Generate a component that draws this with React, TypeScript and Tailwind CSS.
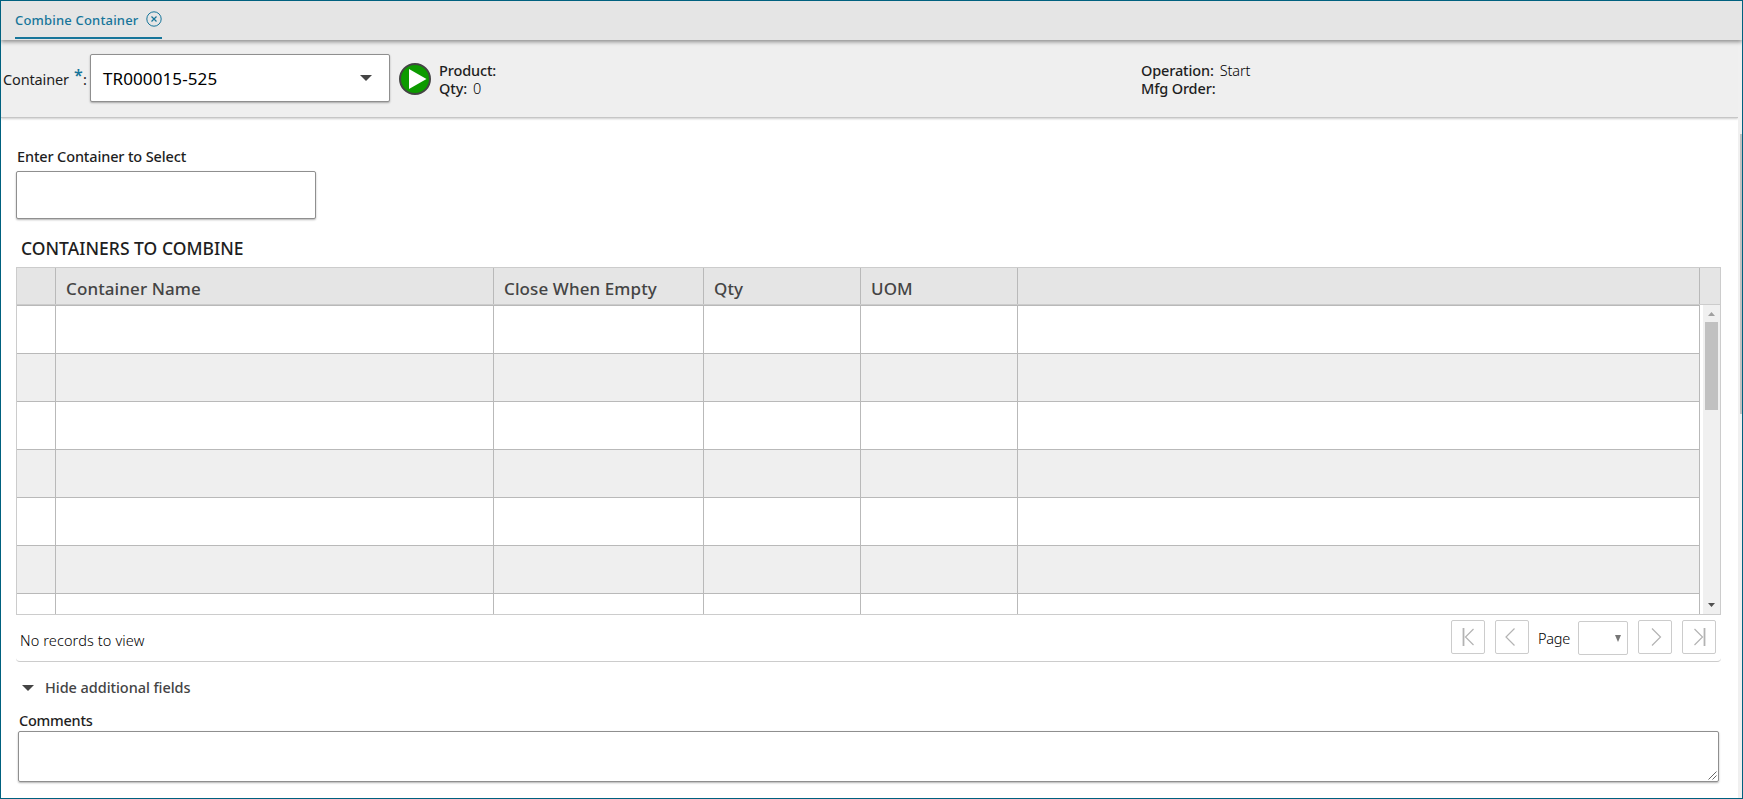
import React from "react";

const columns = ["", "Container Name", "Close When Empty", "Qty", "UOM", ""];
const grid = "grid grid-cols-[39px_438px_210px_157px_157px_682px]";
const rows = [0, 1, 2, 3, 4, 5, 6];

function PagerButton({ children, className = "" }: { children: React.ReactNode; className?: string }) {
  return (
    <button className={`flex h-[34px] w-[34px] items-center justify-center rounded-[2px] border border-[#ccc] bg-white ${className}`}>
      <svg width="32" height="32" viewBox="0 0 32 32" fill="none" stroke="#b3b3b3" strokeWidth="1.2">
        {children}
      </svg>
    </button>
  );
}

export default function App() {
  return (
    <div className="flex h-[799px] w-[1743px] flex-col overflow-hidden border border-[#00617f] bg-white font-['Noto_Sans','Open_Sans',sans-serif] text-[14.5px] leading-[18px] tracking-[-0.14px] text-[#1e1e1e]">
      <div className="z-10 flex h-[39px] shrink-0 bg-[#e5e5e5] pl-[14px] shadow-[0_2px_4px_rgba(0,0,0,0.4)]">
        <div className="flex h-[38px] w-[147px] justify-between border-b-2 border-[#16759a] text-[#16759a]">
          <span className="mt-[10px] whitespace-nowrap text-[13px] font-medium tracking-[0.18px]">Combine Container</span>
          <svg className="mt-[10px]" width="16" height="16" viewBox="0 0 16 16" fill="none" stroke="currentColor">
            <circle cx="8" cy="8" r="7.2" />
            <path d="M5.5 5.5l5 5M10.5 5.5l-5 5" strokeWidth="1.2" />
          </svg>
        </div>
      </div>

      <div className="flex min-h-0 flex-1">
        <div className="flex w-[1737px] shrink-0 flex-col">
          <header className="flex h-[78px] shrink-0 border-b border-[#c6c6c6] bg-[#efefef] shadow-[0_1px_2px_rgba(0,0,0,0.2)]">
            <div className="flex w-[89px] whitespace-nowrap pl-[2px] pt-[30px]">
              <span className="w-[71px]">Container</span>
              <span className="-mt-[4px] w-[9px] text-[16px] font-semibold text-[#16759a]">*</span>
              <span>:</span>
            </div>
            <div className="mt-[14px] flex h-[48px] w-[300px] items-center justify-between rounded-[2px] border border-[#8f8f8f] bg-white pl-[12px] pr-[17px] text-[17px] tracking-[0.1px] text-black shadow-[0_1px_2px_rgba(0,0,0,0.3)]">
              <span className="mt-px">TR000015-525</span>
              <svg width="12" height="6" viewBox="0 0 12 6"><path d="M0 0h12L6 6z" fill="#444" /></svg>
            </div>
            <svg className="ml-[9px] mt-[23px]" width="32" height="32" viewBox="0 0 32 32">
              <circle cx="16" cy="16" r="15" fill="#0d9a00" stroke="#444" strokeWidth="2" />
              <path d="M10 6l17.500 10L10 26z" fill="#fff" />
            </svg>
            <div className="ml-[8px] mt-[21px] w-[702px]">
              <div className="font-[480]">Product:</div>
              <div><span className="font-[480]">Qty:</span><span className="ml-[6px] font-light text-black">0</span></div>
            </div>
            <div className="mt-[21px]">
              <div><span className="font-[480]">Operation:</span><span className="ml-[6px] font-light text-black">Start</span></div>
              <div className="font-[480]">Mfg Order:</div>
            </div>
          </header>

          <main className="flex flex-col pl-[15px]">
            <label className="mt-[29px] pl-[1px] font-[480]">Enter Container to Select</label>
            <div className="mt-[6px] h-[48px] w-[300px] rounded-[2px] border border-[#8f8f8f] bg-white shadow-[0_1px_2px_rgba(0,0,0,0.3)]" />
            <h2 className="mt-[17px] h-[31px] pl-[5px] text-[17.5px] leading-[24px] font-[480] tracking-[0.02px]">CONTAINERS TO COMBINE</h2>

            <section className="flex w-[1705px] flex-col">
              <div className="flex h-[348px] flex-col overflow-hidden border border-[#ccc]">
                <div className="flex h-[37px] shrink-0 border-b border-[#ccc] bg-[#e5e5e5]">
                  <div className={grid}>
                    {columns.map((c, i) => (
                      <div key={i} className="whitespace-nowrap border-r border-[#b9b9b9] pl-[10px] pt-[9px] text-[17px] leading-[24px] font-medium tracking-[0.1px] text-[#444]">{c}</div>
                    ))}
                  </div>
                </div>
                <div className="flex min-h-0 flex-1">
                  <div className="w-[1683px] shrink-0 overflow-hidden border-t border-[#b9b9b9]">
                    {rows.map((r) => (
                      <div key={r} className={`h-[48px] border-b border-[#b9b9b9] ${grid} ${r % 2 ? "bg-[#efefef]" : "bg-white"}`}>
                        {columns.map((_, i) => (
                          <div key={i} className="border-r border-[#b9b9b9]" />
                        ))}
                      </div>
                    ))}
                  </div>
                  <div className="ml-[3px] flex w-[17px] flex-col items-center bg-[#f0f0f0]">
                    <svg className="mt-[7px]" width="7" height="4" viewBox="0 0 7 4"><path d="M0 4h7L3.500 0z" fill="#a0a0a0" /></svg>
                    <div className="mt-[6px] h-[88px] w-[13px] bg-[#c1c1c1]" />
                    <svg className="mb-[7px] mt-auto" width="7" height="4" viewBox="0 0 7 4"><path d="M0 0h7L3.500 4z" fill="#505050" /></svg>
                  </div>
                </div>
              </div>
              <div className="flex h-[47px] rounded-b-[4px] border-b border-[#ccc] pl-[4px] pr-[5px] pt-[5px]">
                <span className="mt-[11px] font-light tracking-[0.12px] text-black">No records to view</span>
                <PagerButton className="ml-auto">
                  <path d="M11.500 7v18" strokeWidth="1.8" /><path d="M21.500 8l-8 8 8 8" />
                </PagerButton>
                <PagerButton className="ml-[10px]"><path d="M18.500 7.500L10 16l8.500 8.500" /></PagerButton>
                <span className="ml-[9px] mt-[9px] w-[40px] font-light tracking-[-0.25px] text-black">Page</span>
                <div className="mt-[1px] flex h-[34px] w-[50px] items-center justify-end rounded-[2px] border border-[#ccc] pr-[6px]">
                  <svg width="6" height="7" viewBox="0 0 6 7"><path d="M0 0h6L3 7z" fill="#777" /></svg>
                </div>
                <PagerButton className="ml-[10px]"><path d="M13 7.500l8.500 8.500-8.500 8.500" /></PagerButton>
                <PagerButton className="ml-[10px]">
                  <path d="M21.500 7v18" strokeWidth="1.8" /><path d="M11.500 8l8 8-8 8" />
                </PagerButton>
              </div>
            </section>

            <div className="mt-[16px] flex items-center pl-[6px] text-[#444]">
              <svg className="mt-[2px]" width="12" height="6" viewBox="0 0 12 6"><path d="M0 0h12L6 6z" fill="#444" /></svg>
              <span className="ml-[11px] font-[480] tracking-[-0.06px]">Hide additional fields</span>
            </div>
            <label className="mt-[15px] pl-[3px] font-[480] tracking-[-0.25px]">Comments</label>
            <div className="ml-[2px] mt-[2px] flex h-[51px] w-[1701px] items-end justify-end rounded-[2px] border border-[#8f8f8f] shadow-[0_1px_2px_rgba(0,0,0,0.3)]">
              <svg className="mb-px mr-px" width="9" height="9" viewBox="0 0 9 9" stroke="#555" strokeWidth="0.900"><path d="M.5 8.500l8-8M4.500 8.500l4-4" /></svg>
            </div>
          </main>
        </div>
        <div className="flex w-[4px] flex-col items-end bg-[#f0f0f0] pt-[94px]">
          <div className="h-[280px] w-[2px] bg-[#c1c1c1]" />
        </div>
      </div>
    </div>
  );
}
